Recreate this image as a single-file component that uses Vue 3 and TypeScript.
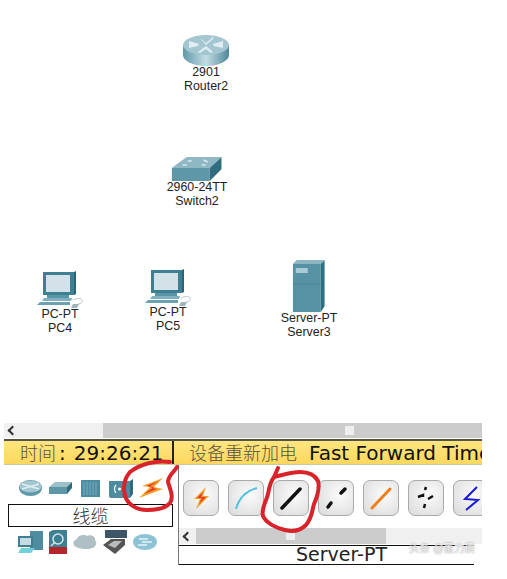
<script setup lang="ts">
interface CanvasNode {
  id: string
  model: string
  name: string
  kind: 'router' | 'switch' | 'pc' | 'server'
  x: number
  y: number
}

const nodes: CanvasNode[] = [
  { id: 'r2', model: '2901', name: 'Router2', kind: 'router', x: 206, y: 35 },
  { id: 's2', model: '2960-24TT', name: 'Switch2', kind: 'switch', x: 197, y: 157 },
  { id: 'p4', model: 'PC-PT', name: 'PC4', kind: 'pc', x: 60, y: 271 },
  { id: 'p5', model: 'PC-PT', name: 'PC5', kind: 'pc', x: 168, y: 269 },
  { id: 's3', model: 'Server-PT', name: 'Server3', kind: 'server', x: 309, y: 260 },
]

const cableButtons = ['auto', 'console', 'straight', 'cross', 'fiber', 'phone', 'serial']
</script>

<template>
  <div class="page">
    <section class="canvas">
      <div
        v-for="node in nodes"
        :key="node.id"
        class="node"
        :style="{ left: node.x + 'px', top: node.y + 'px' }"
      >
        <svg v-if="node.kind === 'router'" width="46" height="31" viewBox="0 0 46 31">
          <defs>
            <linearGradient id="side" x1="0" x2="1" y1="0" y2="0">
              <stop offset="0" stop-color="#5f98a8" />
              <stop offset=".5" stop-color="#c4dde4" />
              <stop offset="1" stop-color="#4f8798" />
            </linearGradient>
          </defs>
          <path d="M0 10v10c0 6 10 11 23 11s23-5 23-11V10z" fill="url(#side)" />
          <ellipse cx="23" cy="10" rx="23" ry="10" fill="#a4c6d1" />
          <path d="M6 6l10 3-1 2-9 2zM40 6l-10 3 1 2 9 2zM17 3l6 5 7-6 1 1-8 7zM15 17l8-6 7 6-2 1-5-4-6 4z" fill="#e0eef2" />
        </svg>
        <svg v-else-if="node.kind === 'switch'" width="50" height="24" viewBox="0 0 50 24">
          <path d="M0 11L15 0h35L38 11z" fill="#8fb8c4" />
          <path d="M0 11h38v13H0z" fill="#5d97a8" />
          <path d="M38 11L50 0v12L38 24z" fill="#2f6c7e" />
          <path d="M16 4h4M32 3l4 2M11 8h4M30 8h4" stroke="#d8e9ee" stroke-width="1.500" />
        </svg>
        <svg v-else-if="node.kind === 'pc'" width="46" height="37" viewBox="0 0 46 37">
          <path d="M6 1h31v23H6z" fill="#3f7f92" />
          <path d="M37 1l2-1v23l-2 1z" fill="#2a6476" />
          <path d="M9 4h24v17H9z" fill="#d3e2e8" />
          <path d="M10 24h22v3H10z" fill="#5a96a7" />
          <path d="M7 27h28l-1 3H5z" fill="#7fb0bf" />
          <path d="M3 31h30v3H0z" fill="#6da0b0" />
          <path d="M36 29c4-2 8-2 9 0s-1 4-4 4" fill="none" stroke="#b9c6ca" />
          <path d="M36 33h6l-2 4h-6z" fill="#9fb4bb" />
        </svg>
        <svg v-else width="32" height="52" viewBox="0 0 32 52">
          <path d="M0 4L4 0h28l-4 4z" fill="#8db6c2" />
          <path d="M0 4h28v48H0z" fill="#5691a4" />
          <path d="M28 4l4-4v46l-4 6z" fill="#2a7184" />
          <path d="M3 8h12v5H3z" fill="#a9cbd4" />
          <path d="M0 24h28" stroke="#4b8597" />
        </svg>
        <span class="node__label">{{ node.model }}</span>
        <span class="node__label">{{ node.name }}</span>
      </div>
    </section>

    <section class="panel">
      <div class="scrollbar">
        <div class="scrollbar__start">
          <span class="scrollbar__arrow" />
        </div>
        <div class="scrollbar__rest">
          <span class="scrollbar__grip scrollbar__grip--top" />
        </div>
      </div>

      <div class="status">
        <div class="status__time">时间<b class="status__colon">:</b><b class="status__clock">29:26:21</b></div>
        <div class="status__actions">设备重新加电<b class="status__forward">Fast Forward Time</b></div>
      </div>

      <div class="tools">
        <div class="tools__left">
          <div class="icons icons--top">
            <svg width="23" height="16" viewBox="0 0 23 16">
              <ellipse cx="11.500" cy="8" rx="11.500" ry="8" fill="#5f98a8" />
              <ellipse cx="11.500" cy="6.500" rx="11" ry="6" fill="#a4c6d1" />
              <path d="M3 4l17 5M3 9l17-5" stroke="#e0eef2" stroke-width="1.500" />
            </svg>
            <svg width="23" height="12" viewBox="0 0 23 12">
              <path d="M0 5L6 0h17l-5 5z" fill="#9cc0ca" />
              <path d="M0 5h18v7H0z" fill="#5c96a7" />
              <path d="M18 5l5-5v6l-5 6z" fill="#2f6c7e" />
            </svg>
            <svg class="icons__chassis" width="19" height="18" viewBox="0 0 19 18">
              <path d="M0 1h19v17H0z" fill="#4d8ba0" />
              <path d="M3 3v13M6 3v13M9 3v13M12 3v13M15 3v13" stroke="#7cadbb" />
            </svg>
            <svg class="icons__wireless" width="25" height="19" viewBox="0 0 25 19">
              <path d="M1 2h21v17H3q-2 0-2-2z" fill="#4f8ca0" />
              <path d="M22 2l3-2v15l-3 4z" fill="#306c80" />
              <circle cx="11.500" cy="10" r="1.500" fill="#fff" />
              <path d="M8 6c-2 2-2 6 0 8M15 6c2 2 2 6 0 8" fill="none" stroke="#fff" stroke-width="1.200" />
            </svg>
            <svg class="icons__bolt" width="24" height="20" viewBox="0 0 24 20">
              <path d="M24 0L3 8l8 1L0 20l24-9-9-2z" fill="#f5a02a" />
              <path d="M20 3L7 8l8 1L5 16l13-5-8-2z" fill="#e23a2a" />
            </svg>
          </div>
          <div class="tools__label">线缆</div>
          <div class="icons icons--bottom">
            <svg width="25" height="22" viewBox="0 0 25 22">
              <path d="M12 0h13v19H12z" fill="#4f8ca0" />
              <path d="M0 5h15v11H0z" fill="#3f7f92" />
              <path d="M2 7h11v7H2z" fill="#c8dbe1" />
              <path d="M3 17h14l-4 5H0z" fill="#72cfdc" />
            </svg>
            <svg width="18" height="24" viewBox="0 0 18 24">
              <path d="M0 2l4-2h14v24H0z" fill="#3f7f92" />
              <path d="M0 17h18v7H0z" fill="#b3262c" />
              <circle cx="9" cy="9" r="5" fill="none" stroke="#d5e6ea" stroke-width="1.500" />
              <path d="M6 12l-4 4" stroke="#d5e6ea" stroke-width="1.500" />
            </svg>
            <svg width="24" height="14" viewBox="0 0 24 14">
              <path d="M3 12C-1 10 0 5 4 4c1-4 8-5 10-3 4-2 9 1 8 4 3 3 0 8-3 8-4 2-12 1-16-1z" fill="#aebfc5" />
            </svg>
            <svg width="24" height="24" viewBox="0 0 24 24">
              <path d="M2 0h22v8H2z" fill="#3d5566" />
              <path d="M0 15l8-6h14v6L12 24z" fill="#555" />
              <path d="M5 15l6-4h8l-7 7z" fill="#bbb" />
            </svg>
            <svg width="24" height="16" viewBox="0 0 24 16">
              <ellipse cx="12" cy="8" rx="12" ry="8" fill="#8cc4d6" />
              <path d="M6 5h9M9 8h10M5 11h9" stroke="#e3f1f5" stroke-width="1.500" />
            </svg>
          </div>
        </div>

        <div class="tools__right">
          <div class="cables">
            <button v-for="type in cableButtons" :key="type" class="cable">
              <svg width="26" height="26" viewBox="0 0 26 26">
                <template v-if="type === 'auto'">
                  <path d="M18 2L6 14h6l-4 10 13-13h-6z" fill="#f5a02a" />
                  <path d="M15 7l-6 6h5l-3 6 7-7h-5z" fill="#e23a2a" />
                </template>
                <path v-else-if="type === 'console'" d="M3 24C6 13 13 6 24 3" fill="none" stroke="#4fc0e0" stroke-width="2" />
                <path v-else-if="type === 'straight'" d="M4 23L22 4" stroke="#111" stroke-width="3.500" stroke-linecap="round" />
                <path v-else-if="type === 'cross'" d="M5 22l3-4M18 8l4-4" stroke="#111" stroke-width="3.500" stroke-linecap="round" />
                <path v-else-if="type === 'fiber'" d="M4 23L22 4" stroke="#f07f1a" stroke-width="3" stroke-linecap="round" />
                <path v-else-if="type === 'phone'" d="M13 2l-1 3M5 12l5-2v2M20 11l-5 3M12 19l-1 4" fill="none" stroke="#111" stroke-width="2.500" />
                <path v-else d="M19 2L7 14l13 1L8 25" fill="none" stroke="#1a1ad6" stroke-width="2" />
              </svg>
            </button>
          </div>
          <div class="scrollbar scrollbar--inner">
            <div class="scrollbar__start scrollbar__start--inner">
              <span class="scrollbar__arrow" />
            </div>
            <div class="scrollbar__rest scrollbar__rest--inner">
              <span class="scrollbar__grip scrollbar__grip--inner" />
            </div>
          </div>
          <div class="tools__name">Server-PT</div>
        </div>
      </div>
    </section>

    <svg class="marks" width="507" height="579" viewBox="0 0 507 579">
      <path d="M170 462c-14-2-30 2-40 10-6 7-7 16-5 24 3 9 12 14 22 14 9 0 19-2 23-7 4-6 0-14-2-21 0-6 6-10 9-15" />
      <path d="M278 468l-4 9c9-2 18-5 26-5 8 0 15 3 18 9 2 7-1 16-4 23-2 7-2 14-8 21-6 6-14 7-21 5-9-2-19-7-22-14-2-7 3-14 5-22 1-6 3-13 6-17" />
    </svg>

    <div class="watermark">头条 @董力辰</div>
  </div>
</template>

<style scoped>
.page {
  position: relative;
  width: 507px;
  height: 579px;
  background: #fff;
  overflow: hidden;
  font-family: "Liberation Sans", "Noto Sans CJK SC", sans-serif;
}

.canvas {
  position: relative;
  height: 423px;
}

.node {
  position: absolute;
  display: flex;
  flex-direction: column;
  align-items: center;
  transform: translateX(-50%);
}

.node__label {
  font-size: 12.400px;
  line-height: 13.500px;
  color: #222;
  white-space: nowrap;
}

.panel {
  width: 478px;
  margin-left: 4px;
}

.scrollbar {
  display: flex;
  height: 15px;
  background: #ccc;
}

.scrollbar__start {
  width: 99px;
  background: #f0f0f0;
  display: flex;
  align-items: center;
  padding-left: 5px;
  box-sizing: border-box;
}

.scrollbar__arrow {
  width: 5px;
  height: 5px;
  border-left: 2px solid #333;
  border-bottom: 2px solid #333;
  transform: rotate(45deg);
}

.scrollbar__rest {
  flex: 1;
  position: relative;
}

.scrollbar__grip {
  position: absolute;
  top: 3px;
  width: 9px;
  height: 9px;
  background: #efefef;
}

.scrollbar__grip--top {
  left: 242px;
}

.status {
  display: flex;
  height: 26px;
  margin-top: 1px;
  border-top: 2px solid #55524a;
  border-bottom: 1px solid #c9c9a0;
  box-sizing: border-box;
  background: linear-gradient(#ffe680, #fbd75e);
  font-family: "Noto Sans CJK SC", sans-serif;
  font-size: 18px;
  font-weight: 300;
  line-height: 22px;
  white-space: nowrap;
  overflow: hidden;
  color: #5b5340;
}

.status b {
  font-family: "DejaVu Sans", sans-serif;
  font-size: 20px;
  font-weight: 400;
  color: #111;
}

.status__time {
  width: 170px;
  padding-left: 16px;
  box-sizing: border-box;
  border-right: 2px solid #222;
  flex: none;
}

.status__colon {
  margin-left: 3px;
}

.status__clock {
  margin-left: 8px;
}

.status__actions {
  padding-left: 15px;
}

.status__forward {
  margin-left: 12px;
}

.tools {
  display: flex;
  margin-left: 4px;
}

.tools__left {
  width: 165px;
  flex: none;
}

.icons {
  display: flex;
  align-items: center;
}

.icons--top {
  height: 39px;
  padding-left: 11px;
  gap: 7px;
  box-sizing: border-box;
  padding-top: 7px;
}

.icons__chassis {
  margin-left: 2px;
}

.icons__wireless {
  margin-left: 1px;
}

.icons__bolt {
  margin-left: -1px;
}

.icons--bottom {
  height: 30px;
  padding-left: 10px;
  gap: 6px;
}

.tools__label {
  height: 23px;
  width: 165px;
  border: 1px solid #111;
  box-sizing: border-box;
  text-align: center;
  font-family: "Noto Sans CJK SC", sans-serif;
  font-size: 18px;
  font-weight: 300;
  line-height: 21px;
  color: #333;
}

.tools__right {
  flex: 1;
  min-width: 0;
  border-left: 1px solid #777;
  margin-left: 5px;
}

.cables {
  display: flex;
  gap: 9px;
  padding: 15px 0 0 4px;
  height: 63px;
  box-sizing: border-box;
  overflow: hidden;
}

.cable {
  flex: none;
  width: 36px;
  height: 36px;
  padding: 0;
  display: flex;
  align-items: center;
  justify-content: center;
  border: 1px solid #aaa;
  border-radius: 7px;
  background: radial-gradient(circle at 60% 40%, #fbfbfb, #dadada);
}

.scrollbar--inner {
  height: 16px;
  background: #f0f0f0;
}

.scrollbar__start--inner {
  width: 17px;
}

.scrollbar__rest--inner {
  flex: none;
  width: 190px;
  background: #ccc;
}

.scrollbar__grip--inner {
  left: 90px;
}

.tools__name {
  height: 20px;
  margin-top: 1px;
  border-top: 1px solid #111;
  border-bottom: 1px solid #111;
  box-sizing: border-box;
  width: 295px;
  padding-left: 30px;
  text-align: center;
  font-family: "DejaVu Sans", sans-serif;
  font-size: 19px;
  line-height: 17px;
  color: #222;
}

.marks {
  position: absolute;
  left: 0;
  top: 0;
  pointer-events: none;
}

.marks path {
  fill: none;
  stroke: #d8232a;
  stroke-width: 4;
  stroke-linecap: round;
  stroke-linejoin: round;
}

.watermark {
  position: absolute;
  left: 409px;
  top: 540px;
  font-size: 10.500px;
  color: #eee;
  text-shadow: 0 0 2px #888;
  white-space: nowrap;
}
</style>
